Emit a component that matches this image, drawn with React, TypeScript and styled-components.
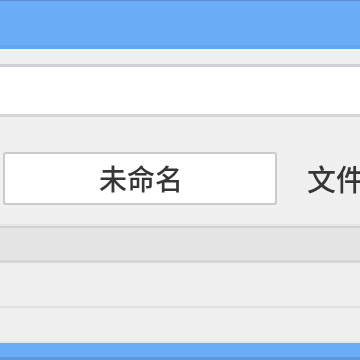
import React from "react";
import styled, { createGlobalStyle } from "styled-components";

const Global = createGlobalStyle`
  html, body { margin: 0; padding: 0; background: #f0f0f0; }
  body { font-family: "Noto Sans CJK SC", "Noto Sans", sans-serif; }
  #root { width: 360px; height: 360px; overflow: hidden; }
`;

const Screen = styled.div`
  width: 360px;
  height: 360px;
  display: flex;
  flex-direction: column;
  overflow: hidden;
  filter: blur(0.5px);
`;

const TitleBar = styled.div`
  height: 44px;
  flex: none;
  background: #6aadf6;
  border-top: 1px solid #5a8ed2;
  border-bottom: 4px solid #62a5ef;
`;

const Toolbar = styled.div`
  height: 13px;
  flex: none;
  background: #f0f0f0;
  border-top: 2px solid #f6f3ef;
  border-bottom: 3px solid #d2d2d6;
`;

const Canvas = styled.div`
  height: 47px;
  flex: none;
  background: #ffffff;
  border-bottom: 3px solid #d6d6d8;
  box-shadow: 0 2px 0 #e6e6e6;
`;

const Panel = styled.div`
  height: 109px;
  flex: none;
  background: #f0f0f0;
  display: flex;
  align-items: center;
  padding: 15px 0 0 3px;
  box-sizing: border-box;
  gap: 30px;
  border-bottom: 2px solid #e8e8e8;
`;

const NameInput = styled.div`
  width: 274px;
  height: 53px;
  box-sizing: border-box;
  flex: none;
  background: #ffffff;
  border: 2px solid #cbcbcd;
  border-radius: 3px;
  display: flex;
  align-items: center;
  justify-content: center;
  font-size: 28px;
  font-weight: 500;
  color: #363636;
  padding-left: 2px;
`;

const Label = styled.span`
  font-size: 29px;
  font-weight: 500;
  color: #363636;
  white-space: nowrap;
`;

const Row = styled.div<{ $h: number; $bg: string; $line: string; $lw: number }>`
  height: ${(p) => p.$h}px;
  flex: none;
  background: ${(p) => p.$bg};
  border-top: ${(p) => p.$lw}px solid ${(p) => p.$line};
`;

const BottomBar = styled.div`
  flex: 1;
  background: #6aadf6;
  border-top: 2px solid #e6e6ea;
  border-bottom: 3px solid #5d96dc;
`;

export default function App() {
  return (
    <>
      <Global />
      <Screen>
        <TitleBar />
        <Toolbar />
        <Canvas />
        <Panel>
          <NameInput>未命名</NameInput>
          <Label>文件</Label>
        </Panel>
        <Row $h={32} $bg="#e5e5e5" $line="#d2d2d2" $lw={2} />
        <Row $h={43} $bg="#f0f0f0" $line="#d6d6d6" $lw={3} />
        <Row $h={33} $bg="#f0f0f0" $line="#e0e0e0" $lw={2} />
        <BottomBar />
      </Screen>
    </>
  );
}
